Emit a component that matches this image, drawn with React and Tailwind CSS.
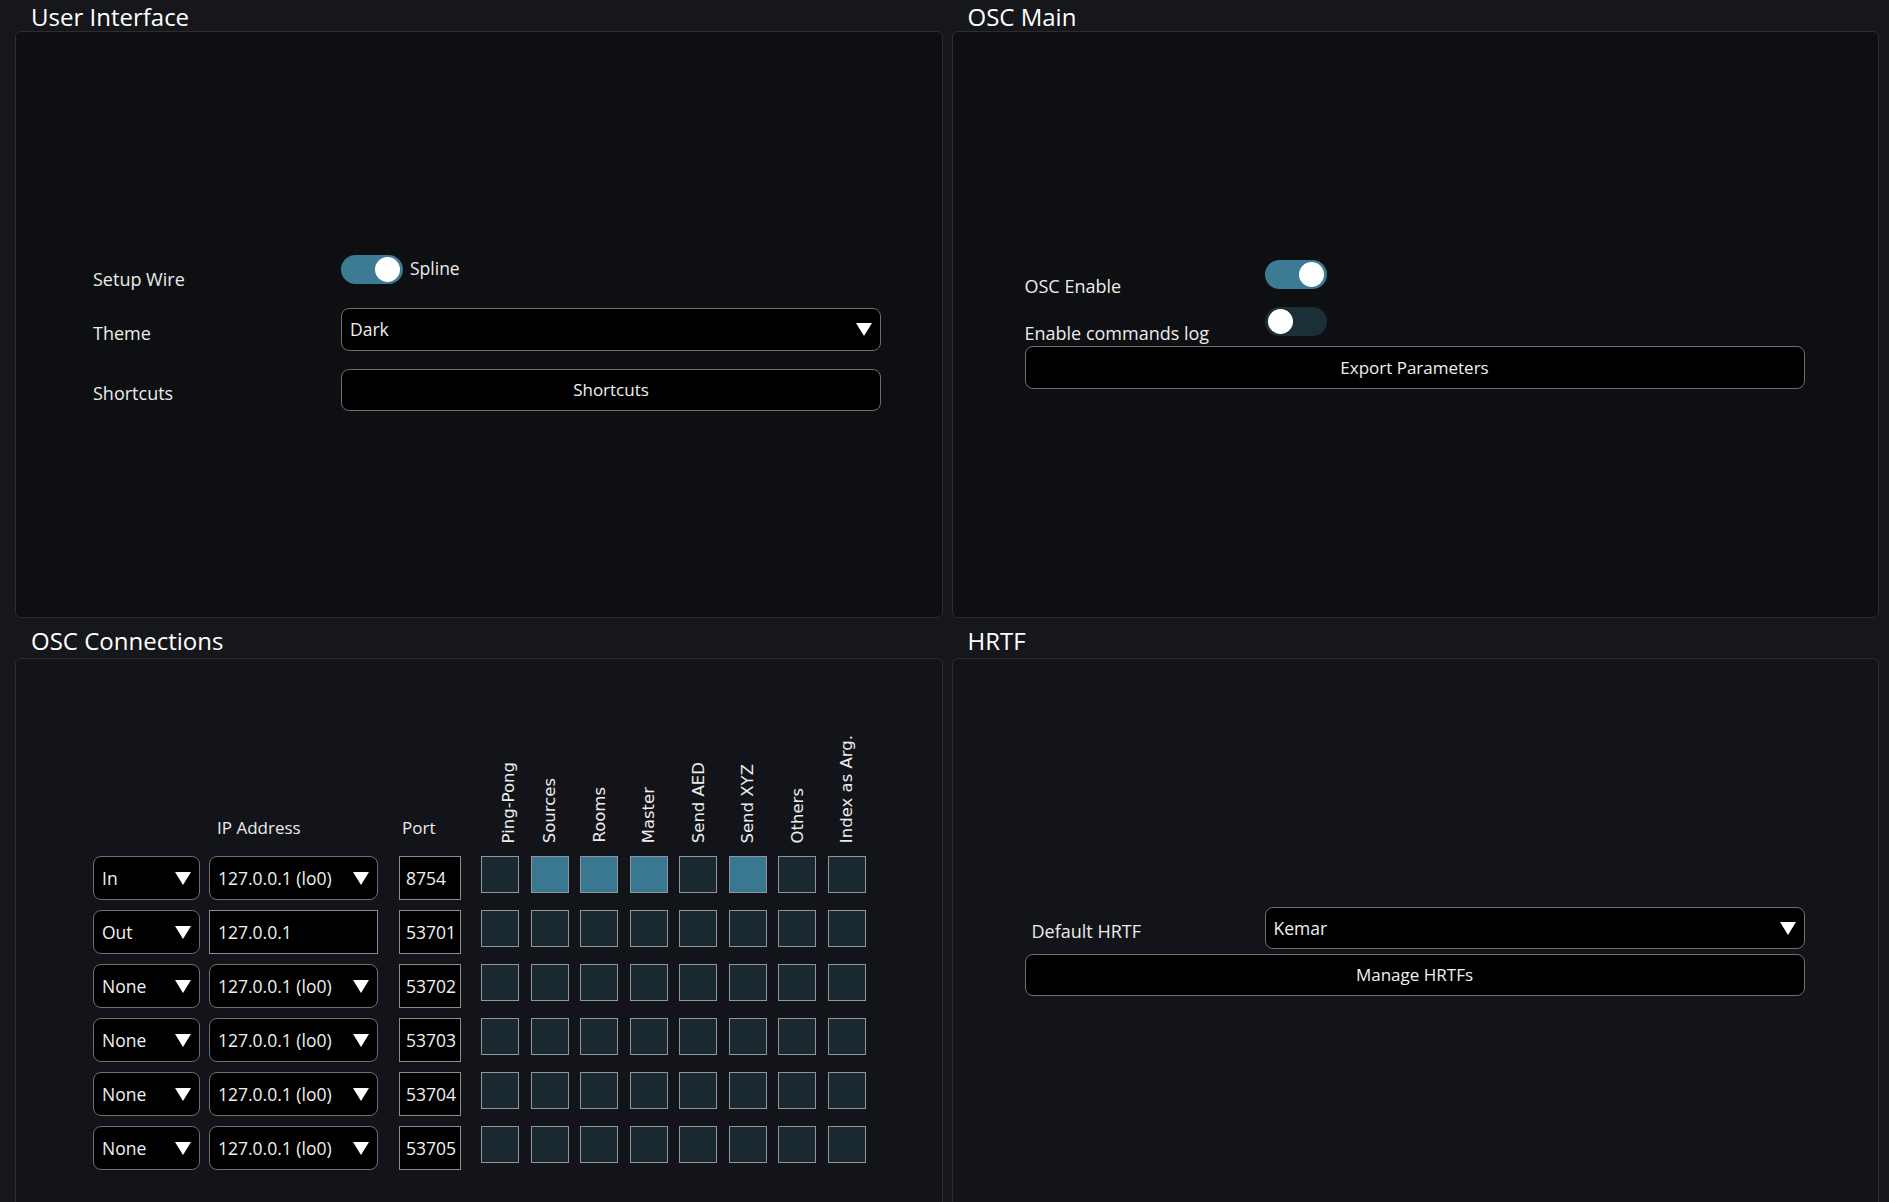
import React from "react";

const Caret = ({ className = "" }) => (
  <svg viewBox="0 0 16 13" className={`w-[16px] h-[13px] shrink-0 ${className}`}>
    <polygon points="0,0 16,0 8,13" fill="#ffffff" />
  </svg>
);

const Toggle = ({ on }) => (
  <div
    className={`relative w-[62px] h-[29px] rounded-full shrink-0 ${
      on ? "bg-[#3b7b94]" : "bg-[#1b2f37]"
    }`}
  >
    <div
      className={`absolute top-[2px] w-[25px] h-[25px] rounded-full bg-white ${
        on ? "right-[3px]" : "left-[3px]"
      }`}
    />
  </div>
);

const Select = ({ value, className = "" }) => (
  <div
    className={`flex items-center justify-between bg-black border border-[#6e6e6e] rounded-lg pl-[8px] pr-[8px] text-[17.5px] text-[#f0f0f0] ${className}`}
  >
    <span>{value}</span>
    <Caret />
  </div>
);

const Button = ({ label, className = "" }) => (
  <div
    className={`flex items-center justify-center bg-black border border-[#6e6e6e] rounded-lg text-[17px] text-[#f0f0f0] ${className}`}
  >
    {label}
  </div>
);

const Section = ({ title, children, panelClass = "", titleClass = "leading-[33px]" }) => (
  <div className="flex flex-col">
    <h2 className={`h-[31px] pl-[16px] text-[24px] text-white ${titleClass}`}>{title}</h2>
    <div className={`border border-[#2b2d33] rounded-md ${panelClass}`}>{children}</div>
  </div>
);

const flagNames = ["Ping-Pong", "Sources", "Rooms", "Master", "Send AED", "Send XYZ", "Others", "Index as Arg."];

const connections = [
  { dir: "In", ip: "127.0.0.1 (lo0)", port: "8754", flags: [0, 1, 1, 1, 0, 1, 0, 0] },
  { dir: "Out", ip: "127.0.0.1", port: "53701", text: true, flags: [0, 0, 0, 0, 0, 0, 0, 0] },
  { dir: "None", ip: "127.0.0.1 (lo0)", port: "53702", flags: [0, 0, 0, 0, 0, 0, 0, 0] },
  { dir: "None", ip: "127.0.0.1 (lo0)", port: "53703", flags: [0, 0, 0, 0, 0, 0, 0, 0] },
  { dir: "None", ip: "127.0.0.1 (lo0)", port: "53704", flags: [0, 0, 0, 0, 0, 0, 0, 0] },
  { dir: "None", ip: "127.0.0.1 (lo0)", port: "53705", flags: [0, 0, 0, 0, 0, 0, 0, 0] },
];

const ConnectionRow = ({ row }) => (
  <div className="flex h-[44px] mt-[10px]">
    <Select value={row.dir} className="w-[107px] h-[44px]" />
    {row.text ? (
      <div className="ml-[9px] w-[169px] h-[44px] flex items-center pl-[8px] bg-black border border-[#8c8c8c] text-[17.5px] text-[#f0f0f0]">
        {row.ip}
      </div>
    ) : (
      <Select value={row.ip} className="ml-[9px] w-[169px] h-[44px]" />
    )}
    <div className="ml-[21px] w-[62px] h-[44px] flex items-center pl-[6px] bg-black border border-[#8c8c8c] text-[17.5px] text-[#f0f0f0]">
      {row.port}
    </div>
    <div className="ml-[20px] flex gap-[11.5px]">
      {row.flags.map((f, i) => (
        <div
          key={i}
          className={`w-[38px] h-[37px] border border-[#8f959a] ${f ? "bg-[#3a7891]" : "bg-[#19292f]"}`}
        />
      ))}
    </div>
  </div>
);

export default function App() {
  return (
    <div className="h-[1202px] overflow-hidden bg-[#16171b] font-['Open_Sans',sans-serif] text-[#ececec]">
      <div className="grid grid-cols-2 gap-x-[9px] gap-y-[9px] pl-[15px] pr-[10px]">
        {/* User Interface */}
        <Section title="User Interface" panelClass="h-[587px] bg-[#0e0f12]">
          <div className="pt-[222px] pl-[77px] text-[18px]">
            <div className="flex h-[30px]">
              <div className="w-[248px] pt-[13px] leading-6">Setup Wire</div>
              <div className="flex items-center gap-[7px]">
                <Toggle on />
                <span className="leading-6 -mt-[3px] text-[17.5px]">Spline</span>
              </div>
            </div>
            <div className="flex items-center h-[43px] mt-[24px]">
              <div className="w-[248px] pt-[6px] leading-6">Theme</div>
              <Select value="Dark" className="w-[540px] h-[43px]" />
            </div>
            <div className="flex items-center h-[42px] mt-[18px]">
              <div className="w-[248px] pt-[5px] leading-6">Shortcuts</div>
              <Button label="Shortcuts" className="w-[540px] h-[42px]" />
            </div>
          </div>
        </Section>

        {/* OSC Main */}
        <Section title="OSC Main" panelClass="h-[587px] bg-[#0e0f12]">
          <div className="pt-[228px] pl-[72px] text-[18px]">
            <div className="flex h-[29px]">
              <div className="w-[240px] pt-[14px] leading-6">OSC Enable</div>
              <Toggle on />
            </div>
            <div className="flex h-[29px] mt-[18px]">
              <div className="w-[240px] pt-[14px] leading-6">Enable commands log</div>
              <Toggle on={false} />
            </div>
            <Button label="Export Parameters" className="w-[780px] h-[43px] mt-[10px]" />
          </div>
        </Section>

        {/* OSC Connections */}
        <Section title="OSC Connections" titleClass="leading-[27px]" panelClass="h-[600px] bg-[#131419]">
          <div className="pt-[76px] pl-[77px] text-[17px]">
            <div className="flex h-[111px] items-end">
              <div className="w-[116px]" />
              <div className="w-[169px] pl-[8px] pb-[6px] leading-6">IP Address</div>
              <div className="ml-[21px] w-[62px] pl-[3px] pb-[6px] leading-6">Port</div>
              <div className="ml-[20px] flex gap-[11.5px] h-full">
                {flagNames.map((n, i) => (
                  <div
                    key={n}
                    className={`w-[38px] h-full flex items-end pb-[3px] ${i === 0 ? "justify-end" : "justify-center"}`}
                  >
                    <span className="[writing-mode:vertical-rl] rotate-180 font-['DejaVu_Sans',sans-serif] text-[16.5px] leading-[21px] whitespace-nowrap">
                      {n}
                    </span>
                  </div>
                ))}
              </div>
            </div>
            {connections.map((row, i) => (
              <ConnectionRow key={i} row={row} />
            ))}
          </div>
        </Section>

        {/* HRTF */}
        <Section title="HRTF" titleClass="leading-[27px]" panelClass="h-[600px] bg-[#131419]">
          <div className="pt-[248px] pl-[72px] text-[18px]">
            <div className="flex items-center h-[42px]">
              <div className="w-[240px] pl-[7px] pt-[6px] leading-6">Default HRTF</div>
              <Select value="Kemar" className="w-[540px] h-[42px]" />
            </div>
            <Button label="Manage HRTFs" className="w-[780px] h-[42px] mt-[5px]" />
          </div>
        </Section>
      </div>
    </div>
  );
}
